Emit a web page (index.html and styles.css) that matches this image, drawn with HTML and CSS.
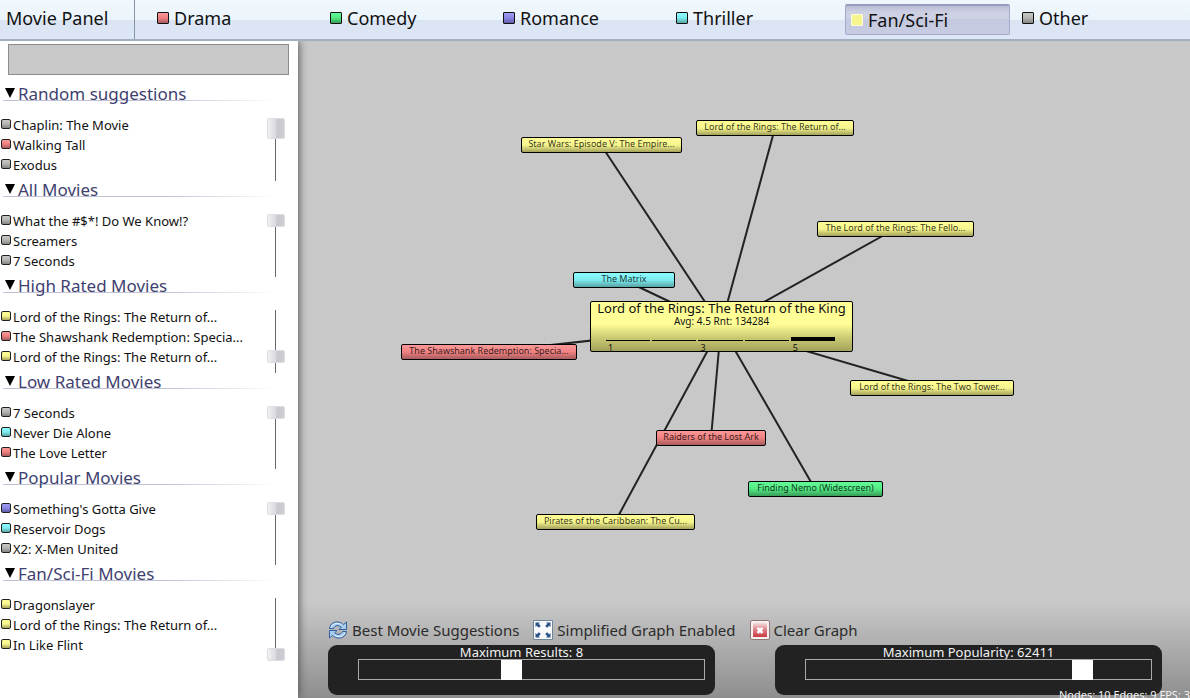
FILE: index.html
```html
<!DOCTYPE html>
<html lang="en">
<head>
<meta charset="utf-8">
<title>Movie Panel</title>
<link rel="stylesheet" href="styles.css">
</head>
<body>
<header class="topbar">
  <h1 class="brand">Movie Panel</h1>
  <nav class="genres" aria-label="Genres">
    <button class="genre" type="button"><span class="swatch drama"></span>Drama</button>
    <button class="genre" type="button"><span class="swatch comedy"></span>Comedy</button>
    <button class="genre" type="button"><span class="swatch romance"></span>Romance</button>
    <button class="genre" type="button"><span class="swatch thriller"></span>Thriller</button>
    <button class="genre active" type="button" aria-pressed="true"><span class="swatch fantasy"></span>Fan/Sci-Fi</button>
    <button class="genre" type="button"><span class="swatch other"></span>Other</button>
  </nav>
</header>
<div class="workspace">
  <aside class="sidebar">
    <input class="search" type="text" aria-label="Search movies">
    <section class="group">
      <h2><svg class="arrow" viewBox="0 0 10 10"><path d="M0 0H10L5 10Z"/></svg>Random suggestions</h2>
      <div class="group-body">
        <ul>
          <li><span class="dot other"></span>Chaplin: The Movie</li>
          <li><span class="dot drama"></span>Walking Tall</li>
          <li><span class="dot other"></span>Exodus</li>
        </ul>
        <input class="scroller tall" type="range" min="0" max="100" value="0" aria-label="Scroll random suggestions">
      </div>
    </section>
    <section class="group">
      <h2><svg class="arrow" viewBox="0 0 10 10"><path d="M0 0H10L5 10Z"/></svg>All Movies</h2>
      <div class="group-body">
        <ul>
          <li><span class="dot other"></span>What the #$*! Do We Know!?</li>
          <li><span class="dot other"></span>Screamers</li>
          <li><span class="dot other"></span>7 Seconds</li>
        </ul>
        <input class="scroller" type="range" min="0" max="100" value="0" aria-label="Scroll all movies">
      </div>
    </section>
    <section class="group">
      <h2><svg class="arrow" viewBox="0 0 10 10"><path d="M0 0H10L5 10Z"/></svg>High Rated Movies</h2>
      <div class="group-body">
        <ul>
          <li><span class="dot fantasy"></span>Lord of the Rings: The Return of...</li>
          <li><span class="dot drama"></span>The Shawshank Redemption: Specia...</li>
          <li><span class="dot fantasy"></span>Lord of the Rings: The Return of...</li>
        </ul>
        <input class="scroller" type="range" min="0" max="100" value="80" aria-label="Scroll high rated movies">
      </div>
    </section>
    <section class="group">
      <h2><svg class="arrow" viewBox="0 0 10 10"><path d="M0 0H10L5 10Z"/></svg>Low Rated Movies</h2>
      <div class="group-body">
        <ul>
          <li><span class="dot other"></span>7 Seconds</li>
          <li><span class="dot thriller"></span>Never Die Alone</li>
          <li><span class="dot drama"></span>The Love Letter</li>
        </ul>
        <input class="scroller" type="range" min="0" max="100" value="0" aria-label="Scroll low rated movies">
      </div>
    </section>
    <section class="group">
      <h2><svg class="arrow" viewBox="0 0 10 10"><path d="M0 0H10L5 10Z"/></svg>Popular Movies</h2>
      <div class="group-body">
        <ul>
          <li><span class="dot romance"></span>Something's Gotta Give</li>
          <li><span class="dot thriller"></span>Reservoir Dogs</li>
          <li><span class="dot other"></span>X2: X-Men United</li>
        </ul>
        <input class="scroller" type="range" min="0" max="100" value="0" aria-label="Scroll popular movies">
      </div>
    </section>
    <section class="group">
      <h2><svg class="arrow" viewBox="0 0 10 10"><path d="M0 0H10L5 10Z"/></svg>Fan/Sci-Fi Movies</h2>
      <div class="group-body">
        <ul>
          <li><span class="dot fantasy"></span>Dragonslayer</li>
          <li><span class="dot fantasy"></span>Lord of the Rings: The Return of...</li>
          <li><span class="dot fantasy"></span>In Like Flint</li>
        </ul>
        <input class="scroller" type="range" min="0" max="100" value="100" aria-label="Scroll fantasy and sci-fi movies">
      </div>
    </section>
  </aside>
  <main class="stage">
    <div class="graph">
      <svg class="edges" width="892" height="540" viewBox="298 41 892 540" aria-hidden="true">
        <path d="M721 326L601 145M721 326L775 128M721 326L895 229M721 326L624 280M721 326L489 352M721 326L932 388M721 326L711 438M721 326L815 489M721 326L615 522"/>
      </svg>
      <button type="button" class="node fantasy n-empire">Star Wars: Episode V: The Empire...</button>
      <button type="button" class="node fantasy n-return">Lord of the Rings: The Return of...</button>
      <button type="button" class="node fantasy n-fellowship">The Lord of the Rings: The Fello...</button>
      <button type="button" class="node thriller n-matrix">The Matrix</button>
      <button type="button" class="node drama n-shawshank">The Shawshank Redemption: Specia...</button>
      <button type="button" class="node fantasy n-towers">Lord of the Rings: The Two Tower...</button>
      <button type="button" class="node drama n-raiders">Raiders of the Lost Ark</button>
      <button type="button" class="node comedy n-nemo">Finding Nemo (Widescreen)</button>
      <button type="button" class="node fantasy n-pirates">Pirates of the Caribbean: The Cu...</button>
      <article class="focus">
        <h3>Lord of the Rings: The Return of the King</h3>
        <p>Avg: 4.5 Rnt: 134284</p>
        <ol class="ratings">
          <li>1</li><li></li><li>3</li><li></li><li class="top">5</li>
        </ol>
      </article>
    </div>
    <div class="controls">
      <div class="actions">
        <button type="button" class="action">
          <svg class="icon" viewBox="0 0 20 20">
            <g fill="#a9cbee" stroke="#2f5f9c" stroke-linejoin="round">
              <path d="M1.500 8.500C2 3.500 7 1 11 2.200C13 2.700 14.500 3.500 15.500 4.500L18.500 2V9.500H11L13.300 7.200C10.500 4.800 7 5.200 5.500 8.500Z"/>
              <path d="M18.500 11.500C18 16.500 13 19 9 17.800C7 17.300 5.500 16.500 4.500 15.500L1.500 18V10.500H9L6.700 12.800C9.500 15.200 13 14.800 14.500 11.500Z"/>
            </g>
            <path d="M3 7.500C4.500 3.500 9 2.500 13 4.500M17 12.500C15.500 16.500 11 17.500 7 15.500" fill="none" stroke="#e3f0fc"/>
          </svg>Best Movie Suggestions</button>
        <button type="button" class="action">
          <svg class="icon" viewBox="0 0 20 20">
            <path d="M.5 .5H19.500V19.500H.5Z" fill="#f8fafc" stroke="#71869b"/>
            <g fill="#2b5488"><path d="M2.500 2.500H7L5.700 3.800L7.800 5.900L5.900 7.800L3.800 5.700L2.500 7Z"/><path d="M17.500 2.500V7L16.200 5.700L14.100 7.800L12.200 5.900L14.300 3.800L13 2.500Z"/><path d="M2.500 17.500V13L3.800 14.300L5.900 12.200L7.800 14.100L5.700 16.200L7 17.500Z"/><path d="M17.500 17.500H13L14.300 16.200L12.200 14.100L14.100 12.200L16.200 14.300L17.500 13Z"/></g>
          </svg>Simplified Graph Enabled</button>
        <button type="button" class="action">
          <svg class="icon" viewBox="0 0 20 20">
            <defs><linearGradient id="red" x2="0" y2="1"><stop offset="0" stop-color="#f2dcdc"/><stop offset=".5" stop-color="#dd7c84"/><stop offset="1" stop-color="#c93843"/></linearGradient></defs>
            <rect x=".5" y=".5" width="19" height="19" rx="1.500" fill="#f7f0f0" stroke="#8f7777"/>
            <rect x="3" y="3" width="14" height="14" fill="url(#red)"/>
            <path d="M7.500 8L12.500 13M12.500 8L7.500 13" stroke="#fff" stroke-width="2.500"/>
          </svg>Clear Graph</button>
      </div>
      <div class="panels">
        <div class="panel">
          <label for="results">Maximum Results: 8</label>
          <input id="results" class="slider" type="range" min="1" max="17" value="8">
        </div>
        <div class="panel">
          <label for="popularity">Maximum Popularity: 62411</label>
          <input id="popularity" class="slider" type="range" min="0" max="76111" value="62411">
        </div>
      </div>
    </div>
    <p class="stats">Nodes: 10 Edges: 9 FPS: 3</p>
  </main>
</div>
</body>
</html>
```
FILE: styles.css
```css
* { box-sizing: border-box; }

body {
  margin: 0;
  height: 100vh;
  display: flex;
  flex-direction: column;
  overflow: hidden;
  background: #c8c8c8;
  color: #111;
  font-family: "Noto Sans", "Open Sans", sans-serif;
}

h1, h2, h3, p, ul, ol { margin: 0; padding: 0; font-weight: 400; }
ul, ol { list-style: none; }
button { font: inherit; color: inherit; cursor: pointer; }

.drama { --hi: #fb9999; --mid: #f08080; --lo: #a85c5e; }
.comedy { --hi: #62fb95; --mid: #52ea84; --lo: #389b58; }
.romance { --hi: #a09bf5; --mid: #8b86e4; --lo: #615ca8; }
.thriller { --hi: #8dfcff; --mid: #7cecee; --lo: #58a3a4; }
.fantasy { --hi: #fffe96; --mid: #f6f58d; --lo: #a3a25b; }
.other { --hi: #c9c9c5; --mid: #b4b4b0; --lo: #858581; }

/* Top bar */
.topbar {
  flex: none;
  display: flex;
  height: 41px;
  border-bottom: 2px solid #a3afc0;
  background: linear-gradient(#f1f8fd, #eaf4fb 20px, #dae4f2 20px, #dce6f6);
}
.brand {
  width: 135px;
  padding-left: 6px;
  border-right: 1px solid #8794a6;
  font-size: 18px;
  line-height: 37px;
}
.genres {
  flex: 1;
  display: grid;
  grid-template-columns: repeat(6, 1fr);
  gap: 8px;
  padding: 0 7px 0 18px;
}
.genre {
  display: flex;
  align-items: center;
  gap: 5px;
  height: 36px;
  padding: 0 4px;
  border: 0;
  background: none;
  font-size: 18px;
  line-height: 24px;
}
.swatch {
  width: 12px;
  height: 12px;
  border: 1px solid #111;
  border-radius: 1px;
  background: linear-gradient(var(--hi), var(--mid) 50%, var(--lo));
}
.genre.active {
  height: 31px;
  margin-top: 4px;
  padding: 0 5px;
  border: 1px solid #a3aacb;
  border-top: 2px solid #959cbc;
  border-radius: 2px;
  background: linear-gradient(#b9bdd6, #cdd0e3 6px, #cfd2e5 13px, #c5c9df 13px, #c8cce2);
}
.active .swatch { border-color: #fbfbe0; background: #f7f58e; }

/* Sidebar */
.workspace { flex: 1; display: flex; min-height: 0; }
.sidebar {
  position: relative;
  z-index: 1;
  flex: none;
  width: 298px;
  padding-top: 3px;
  background: #fff;
  box-shadow: 1px 0 8px #555;
  clip-path: inset(0 -10px 0 0);
}
.search {
  display: block;
  width: 281px;
  height: 31px;
  margin: 0 0 5px 8px;
  border: 1px solid #8c8c8c;
  background: #c8c8c8;
  font: inherit;
}
.group { height: 96px; }
.group h2 {
  display: flex;
  align-items: center;
  gap: 3px;
  width: 274px;
  height: 21px;
  margin-bottom: 14px;
  padding: 6px 0 0 5px;
  background: linear-gradient(90deg, #c2c2d6 60%, #fff) 3px 20px / 100% 1px no-repeat;
  color: #403f70;
  font-size: 17px;
  line-height: 20px;
}
.arrow { width: 10px; height: 10px; margin-bottom: 1px; fill: #000; }
.group-body { display: flex; justify-content: space-between; align-items: flex-start; padding: 0 13px 0 1px; }
.group li {
  display: flex;
  align-items: center;
  gap: 2px;
  height: 20px;
  font-size: 13px;
  line-height: 20px;
  white-space: nowrap;
}
.dot {
  width: 10px;
  height: 10px;
  margin-bottom: 2px;
  border: 1px solid #222;
  border-radius: 2px;
  background: linear-gradient(var(--hi), var(--mid) 50%, var(--lo));
}
.scroller {
  appearance: none;
  writing-mode: vertical-lr;
  width: 18px;
  height: 63px;
  margin: 3px 0 -6px;
  background: linear-gradient(#666, #666) 8px 0 / 1px 100% no-repeat;
}
.scroller::-webkit-slider-thumb {
  appearance: none;
  width: 18px;
  height: 13px;
  border: 1px solid #dcdce2;
  border-radius: 2px;
  background: linear-gradient(90deg, #f1f1f3, #d8d8dd 50%, #c8c8cf 55%, #cdcdd4);
}
.tall::-webkit-slider-thumb { height: 21px; }

/* Graph */
.stage {
  position: relative;
  flex: 1;
  display: flex;
  flex-direction: column;
  justify-content: space-between;
  overflow: hidden;
  background: linear-gradient(0deg, #8e8e8e, #c8c8c8 96px);
}
.graph { position: relative; flex: 1; }
.edges { position: absolute; left: 0; top: 0; fill: none; stroke: #222; stroke-width: 2px; }
.node {
  position: absolute;
  height: 16px;
  padding: 0 0 2px;
  border: 1px solid #000;
  border-radius: 2px;
  background: linear-gradient(var(--hi), var(--mid) 50%, var(--lo));
  color: rgba(0, 0, 0, 0.8);
  font-size: 9px;
  line-height: 12px;
  white-space: nowrap;
}
.n-empire { left: 223px; top: 96px; width: 161px; }
.n-return { left: 398px; top: 79px; width: 158px; }
.n-fellowship { left: 519px; top: 180px; width: 157px; }
.n-matrix { left: 275px; top: 231px; width: 102px; }
.n-shawshank { left: 103px; top: 303px; width: 176px; }
.n-towers { left: 552px; top: 339px; width: 164px; }
.n-raiders { left: 358px; top: 389px; width: 110px; }
.n-nemo { left: 450px; top: 440px; width: 135px; }
.n-pirates { left: 238px; top: 473px; width: 159px; }
.focus {
  position: absolute;
  left: 292px;
  top: 260px;
  width: 263px;
  height: 51px;
  border: 1px solid #000;
  border-radius: 2px;
  background: linear-gradient(#fffe96 45%, #d0cf76 70%, #a3a25b);
  text-align: center;
  white-space: nowrap;
}
.focus h3 { font-size: 13px; line-height: 12px; }
.focus p { font-size: 10px; line-height: 14px; }
.ratings {
  display: grid;
  grid-template-columns: repeat(5, 1fr);
  gap: 2px;
  margin: 9px 17px 0 15px;
}
.ratings li {
  height: 13px;
  padding: 2px 0 0 2px;
  border-top: 1px solid #000;
  margin-top: 3px;
  font-size: 9px;
  line-height: 9px;
  text-align: left;
}
.ratings .top { margin-top: 0; border-top-width: 4px; }

/* Controls */
.controls { padding: 0 28px 3px 30px; }
.actions { display: flex; gap: 14px; height: 24px; margin-bottom: 3px; }
.action {
  display: flex;
  align-items: center;
  gap: 4px;
  padding: 0;
  border: 0;
  background: none;
  color: #2b2b2b;
  font-size: 15px;
  line-height: 20px;
  white-space: nowrap;
}
.icon { width: 20px; height: 20px; }
.panels { display: flex; gap: 60px; }
.panel {
  flex: 1;
  display: flex;
  flex-direction: column;
  height: 50px;
  padding: 0 10px 0 30px;
  border-radius: 9px;
  background: #222;
}
.panel label {
  height: 14px;
  margin-left: -20px;
  color: #f2f2f2;
  font-size: 13px;
  line-height: 14px;
  text-align: center;
}
.slider {
  appearance: none;
  width: 100%;
  height: 21px;
  margin: 0;
  border: 1px solid #aaa;
  background: none;
}
.slider::-webkit-slider-thumb {
  appearance: none;
  width: 21px;
  height: 20px;
  background: #fff;
}
.stats {
  position: absolute;
  right: 0;
  bottom: -4px;
  color: #f2f2f2;
  font-size: 11px;
  line-height: 14px;
  white-space: nowrap;
}
```
